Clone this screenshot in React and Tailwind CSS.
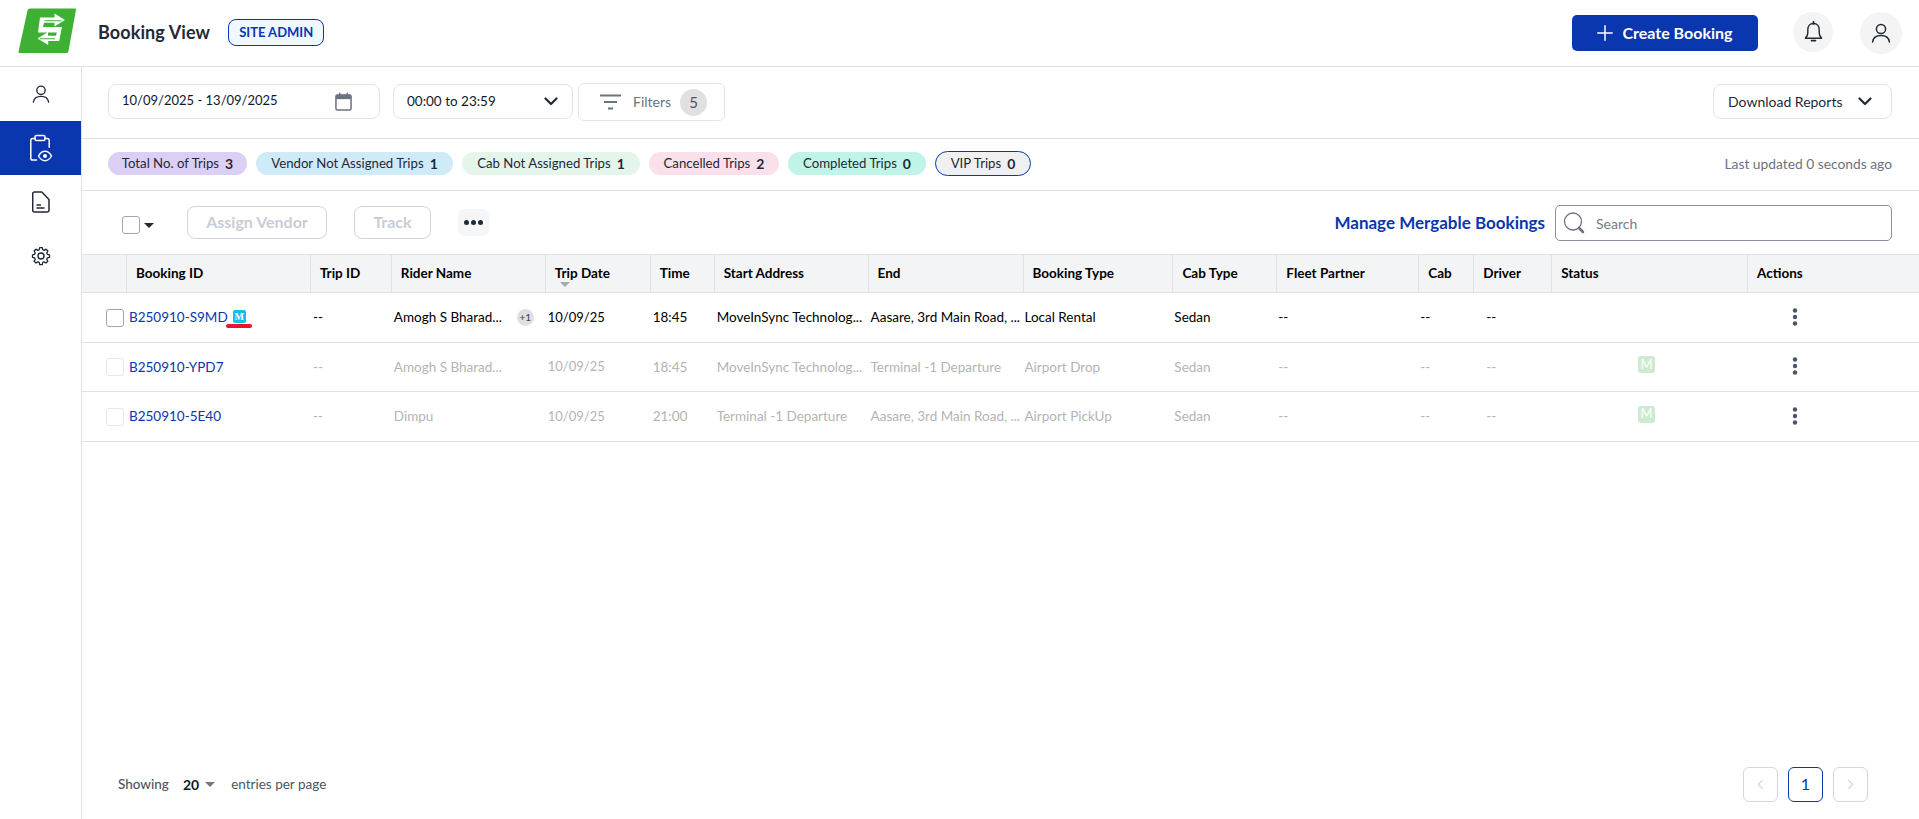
import React from "react";

const UserIcon = ({ className = "w-[22px] h-[22px]" }) => (
  <svg viewBox="0 0 22 22" fill="none" stroke="currentColor" strokeWidth="1.5" strokeLinecap="round" className={className}>
    <circle cx="11" cy="7" r="4.6" />
    <path d="M2.6 20c.6-4.4 4-6.4 8.4-6.4s7.800 2 8.400 6.400" />
  </svg>
);

const ClipEye = () => (
  <svg viewBox="0 0 24 28" fill="none" stroke="#fff" strokeWidth="1.500" strokeLinecap="round" strokeLinejoin="round" className="w-[24px] h-[28px]">
    <path d="M6 4.500H3.600A1.800 1.800 0 0 0 1.800 6.300v17.900A1.800 1.800 0 0 0 3.600 26h4" />
    <path d="M16 4.500h2.400a1.800 1.800 0 0 1 1.800 1.800v7" />
    <rect x="6" y="1.500" width="10" height="5" rx="1.500" />
    <path d="M9.500 22c1.800-3.200 4-4.700 6.500-4.700s4.700 1.500 6.500 4.700c-1.800 3.200-4 4.700-6.500 4.700S11.300 25.200 9.500 22Z" fill="#0a36b0" />
    <circle cx="16" cy="22" r="2" fill="#fff" stroke="none" />
  </svg>
);

const DocIcon = () => (
  <svg viewBox="0 0 18 22" fill="none" stroke="#1f2937" strokeWidth="1.500" strokeLinejoin="round" strokeLinecap="round" className="w-[18px] h-[22px]">
    <path d="M2.500 1h7.300L17 8.500v10.800a1.800 1.800 0 0 1-1.800 1.800H2.500a1.800 1.800 0 0 1-1.800-1.800V2.800A1.800 1.800 0 0 1 2.500 1Z" />
    <path d="M5 14h3.500M5 17h7" />
  </svg>
);

const GearIcon = () => (
  <svg viewBox="0 0 24 24" fill="none" stroke="#1f2937" strokeWidth="1.700" strokeLinecap="round" strokeLinejoin="round" className="w-[20px] h-[20px]">
    <path d="M10.300 2.300h3.400l.6 2.800 1.900.8 2.400-1.500 2.400 2.400-1.500 2.400.8 1.900 2.800.6v3.400l-2.800.6-.8 1.900 1.500 2.400-2.400 2.400-2.400-1.500-1.900.8-.6 2.800h-3.400l-.6-2.800-1.900-.8-2.400 1.500-2.400-2.400 1.500-2.400-.8-1.900-2.800-.6v-3.400l2.800-.6.8-1.900-1.500-2.400 2.400-2.400 2.400 1.500 1.900-.8Z" transform="translate(12 12) scale(.92) translate(-12 -13.300)" />
    <circle cx="12" cy="12" r="3.600" />
  </svg>
);

const Logo = () => (
  <svg viewBox="0 0 58 45" className="w-[58px] h-[45px]">
    <path d="M12 0.500H57a1 1 0 0 1 1 1.200L50.500 43a2 2 0 0 1-2 2H1.500a1 1 0 0 1-1-1.200L9.500 2.500A2.500 2.500 0 0 1 12 0.500Z" fill="#3eb034" />
    <path d="M22 9.500h14.500V5.500L47 12l-10.500 6.500v-3.700H26l-1.100 4.300h19l-2.700 14h-11v4L19.500 30.500 30 24v3.800h8l.8-3.400H20L22 9.500Z" fill="#fff" />
    <path d="M26.500 12.800h17M22 30.700h15" stroke="#3eb034" strokeWidth="1.100" />
  </svg>
);

const Chevron = ({ className = "w-[14px] h-[9px]" }) => (
  <svg viewBox="0 0 14 9" fill="none" stroke="#1f2937" strokeWidth="2.200" strokeLinecap="round" strokeLinejoin="round" className={className}>
    <path d="M1.500 1.500 7 7l5.500-5.500" />
  </svg>
);

const Dots = () => (
  <svg viewBox="0 0 6 20" className="w-[6px] h-[20px]" fill="#475569">
    <circle cx="3" cy="3.500" r="2.200" />
    <circle cx="3" cy="10" r="2.200" />
    <circle cx="3" cy="16.500" r="2.200" />
  </svg>
);

const chips = [
  ["Total No. of Trips", "3", "bg-[#dccff5] w-[139px]"],
  ["Vendor Not Assigned Trips", "1", "bg-[#cfebf7] w-[197px]"],
  ["Cab Not Assigned Trips", "1", "bg-[#e4f5ec] w-[178px]"],
  ["Cancelled Trips", "2", "bg-[#fae0ea] w-[130px]"],
  ["Completed Trips", "0", "bg-[#c0f4e8] w-[138px]"],
];

const cols = [
  ["", "w-[45px]"],
  ["Booking ID", "w-[184px]"],
  ["Trip ID", "w-[81px]"],
  ["Rider Name", "w-[154px]"],
  ["Trip Date", "w-[105px]"],
  ["Time", "w-[64px]"],
  ["Start Address", "w-[154px]"],
  ["End", "w-[155px]"],
  ["Booking Type", "w-[150px]"],
  ["Cab Type", "w-[104px]"],
  ["Fleet Partner", "w-[142px]"],
  ["Cab", "w-[55px]"],
  ["Driver", "w-[78px]"],
  ["Status", "w-[196px]"],
  ["Actions", "w-[171px]"],
];

const rows = [
  { id: "B250910-S9MD", rider: "Amogh S Bharad...", date: "10/09/25", time: "18:45", start: "MoveInSync Technolog...", end: "Aasare, 3rd Main Road, ...", type: "Local Rental", h: "h-[50px]" },
  { id: "B250910-YPD7", rider: "Amogh S Bharad...", date: "10/09/25", time: "18:45", start: "MoveInSync Technolog...", end: "Terminal -1 Departure", type: "Airport Drop", muted: true, h: "h-[49px]" },
  { id: "B250910-5E40", rider: "Dimpu", date: "10/09/25", time: "21:00", start: "Terminal -1 Departure", end: "Aasare, 3rd Main Road, ...", type: "Airport PickUp", muted: true, h: "h-[50px]" },
];

function Row({ r }) {
  const c = r.muted ? "text-[#b4b4b4]" : "text-black";
  return (
    <div className={`flex items-center border-b border-[#e2e2e2] text-[13.5px] ${r.h} ${c}`}>
      <div className="w-[45px] pl-[24px]">
        <div className={`w-[18px] h-[18px] rounded-[3px] border ${r.muted ? "border-[#e4e7ec]" : "border-[#9ca8b8]"}`} />
      </div>
      <div className="w-[184px] pl-[2px] flex items-center text-[#0a36b0] relative">
        <span>{r.id}</span>
        {!r.muted && (
          <>
            <span className="ml-[5px] -mt-[3px] w-[13px] h-[13px] rounded-[2px] bg-[#13bdf0] text-white text-[10px] font-bold flex items-center justify-center font-['Liberation_Serif',serif]">M</span>
            <span className="absolute left-[99px] top-[17px] w-[26px] h-[4px] rounded-full bg-[#e8152b]" />
          </>
        )}
      </div>
      <div className="w-[81px] pl-[2px]">--</div>
      <div className="w-[154px] pl-[2px] flex items-center">
        <span className="w-[123px] whitespace-nowrap">{r.rider}</span>
        {!r.muted && <span className="w-[17px] h-[17px] rounded-full bg-[#e0e0e0] text-[10px] text-[#374151] flex items-center justify-center">+1</span>}
      </div>
      <div className="w-[105px] pl-[2px] text-[13px]">{r.date}</div>
      <div className="w-[64px] pl-[2px]">{r.time}</div>
      <div className="w-[154px] pl-[2px] whitespace-nowrap">{r.start}</div>
      <div className="w-[155px] pl-[2px] whitespace-nowrap">{r.end}</div>
      <div className="w-[150px] pl-[1px]">{r.type}</div>
      <div className="w-[104px] pl-[1px]">Sedan</div>
      <div className="w-[142px] pl-[1px]">--</div>
      <div className="w-[55px] pl-[1px]">--</div>
      <div className="w-[78px] pl-[12px]">--</div>
      <div className="w-[196px] pl-[86px]">
        {r.muted && <span className="-mt-[5px] w-[17px] h-[17px] rounded-[3px] bg-[#cdebd0] text-white text-[13px] flex items-center justify-center">M</span>}
      </div>
      <div className="w-[171px] pl-[44px] flex items-center -mt-[2px]"><Dots /></div>
    </div>
  );
}

export default function App() {
  return (
    <div className="w-[1919px] h-[819px] overflow-hidden bg-white font-['Lato',sans-serif] text-[#111827] flex flex-col">
      <header className="h-[67px] shrink-0 border-b border-[#e2e2e2] flex items-center">
        <div className="ml-[18px] -mt-[6px]"><Logo /></div>
        <h1 className="ml-[22px] text-[18px] font-bold tracking-[0.1px] text-[#1f2937] -mt-[1px]">Booking View</h1>
        <span className="ml-[18px] h-[27px] w-[96px] rounded-lg border border-[#0a36b0] bg-[#f0f8ff] text-[#0a36b0] text-[13px] font-bold flex items-center justify-center -mt-[1px]">SITE ADMIN</span>
        <button className="ml-auto h-[36px] w-[186px] rounded-[5px] bg-[#0a36b0] text-white text-[16px] font-bold flex items-center justify-center gap-[9px] -mt-[1px]">
          <svg viewBox="0 0 16 16" className="w-[16px] h-[16px]" stroke="#fff" strokeWidth="1.500" strokeLinecap="round"><path d="M8 .8v14.400M.8 8h14.400" /></svg>
          Create Booking
        </button>
        <div className="ml-[35px] w-[40px] h-[40px] rounded-full bg-[#f4f4f4] flex items-center justify-center -mt-[2px]">
          <svg viewBox="0 0 20 24" fill="none" stroke="#1f2937" strokeWidth="1.500" strokeLinejoin="round" className="w-[19px] h-[23px]">
            <path d="M10 2.500c-3.800 0-6 3-6 6.500v3.500c0 2-1 3.800-2.500 5.500h17c-1.500-1.700-2.500-3.500-2.500-5.500V9c0-3.500-2.200-6.500-6-6.500Z" />
            <path d="M10 1v1.500M8 20.500h4" strokeLinecap="round" strokeWidth="2" />
          </svg>
        </div>
        <div className="ml-[27px] mr-[17px] w-[42px] h-[42px] rounded-full bg-[#f4f4f4] flex items-center justify-center text-[#1f2937]">
          <UserIcon />
        </div>
      </header>

      <div className="flex flex-1 min-h-0">
        <aside className="w-[82px] shrink-0 border-r border-[#e2e2e2] flex flex-col">
          <div className="h-[54px] flex items-center justify-center text-[#1f2937]"><UserIcon className="w-[20px] h-[20px]" /></div>
          <div className="h-[54px] bg-[#0a36b0] flex items-center justify-center"><ClipEye /></div>
          <div className="h-[54px] flex items-center justify-center"><DocIcon /></div>
          <div className="h-[54px] flex items-center justify-center"><GearIcon /></div>
        </aside>

        <main className="w-[1837px] flex flex-col min-h-0">
          <div className="h-[72px] shrink-0 border-b border-[#e2e2e2] flex items-center pl-[26px] pr-[27px] text-[14px]">
            <div className="w-[272px] h-[35px] -mt-[3px] rounded-lg border border-[#e2e4e8] flex items-center pl-[13px] pr-[27px] justify-between">
              <span className="text-[13px]">10/09/2025 - 13/09/2025</span>
              <svg viewBox="0 0 18 20" fill="none" className="w-[17px] h-[19px]">
                <rect x="1" y="3" width="16" height="16" rx="1.500" stroke="#6b7280" strokeWidth="1.600" />
                <path d="M1 3h16v4.500H1z" fill="#6b7280" />
                <path d="M5 .8v3M13 .8v3" stroke="#6b7280" strokeWidth="1.600" />
              </svg>
            </div>
            <div className="ml-[13px] w-[180px] h-[35px] -mt-[3px] rounded-lg border border-[#e2e4e8] flex items-center pl-[13px] pr-[14px] justify-between">
              <span className="text-[13.5px]">00:00 to 23:59</span>
              <Chevron />
            </div>
            <div className="ml-[5px] w-[147px] h-[38px] -mt-[1px] rounded-md border border-[#e2e4e8] flex items-center pl-[21px]">
              <svg viewBox="0 0 21 16" className="w-[21px] h-[16px]" stroke="#6b7280" strokeWidth="1.800">
                <path d="M0 1.500h21M4 8h13M8 14.500h5" />
              </svg>
              <span className="ml-[12px] -mt-[1px] text-[#6b7280]">Filters</span>
              <span className="ml-[9px] w-[27px] h-[27px] rounded-full bg-[#e0e0e0] text-[#4b5563] text-[15px] flex items-center justify-center">5</span>
            </div>
            <div className="ml-auto w-[179px] h-[35px] -mt-[2px] rounded-lg border border-[#e2e4e8] flex items-center pl-[14px] pr-[19px] justify-between text-[#1f2937]">
              <span>Download Reports</span>
              <Chevron />
            </div>
          </div>

          <div className="h-[52px] shrink-0 border-b border-[#e2e2e2] flex items-center pl-[26px] pr-[27px] text-[13.2px]">
            <div className="flex items-center gap-[9px] -mt-[2px]">
              {chips.map(([label, n, c]) => (
                <span key={label} className={`h-[23px] rounded-full flex items-center justify-center gap-[6px] text-[#1f2937] ${c}`}>
                  {label}<b className="font-bold text-[14px]">{n}</b>
                </span>
              ))}
              <span className="h-[25px] w-[96px] rounded-full border border-[#0a36b0] bg-[#f0f0f0] flex items-center justify-center gap-[6px] text-[#1f2937]">
                VIP Trips<b className="font-bold text-[14px]">0</b>
              </span>
            </div>
            <span className="ml-auto text-[#6b7280] text-[13.8px]">Last updated 0 seconds ago</span>
          </div>

          <div className="h-[63px] shrink-0 flex items-center pl-[40px] pr-[27px]">
            <div className="w-[18px] h-[18px] mt-[4px] rounded-[3px] border border-[#9ca8b8]" />
            <span className="ml-[4px] mt-[6px] w-0 h-0 border-x-[5px] border-x-transparent border-t-[5px] border-t-[#1f2937]" />
            <button className="ml-[33px] w-[140px] h-[33px] -mt-[1px] rounded-lg border border-[#cfd4dc] text-[16px] font-bold text-[#c7ccd6]">Assign Vendor</button>
            <button className="ml-[27px] w-[77px] h-[33px] -mt-[1px] rounded-lg border border-[#cfd4dc] text-[16px] font-bold text-[#c7ccd6]">Track</button>
            <span className="ml-[27px] w-[31px] h-[27px] rounded-md bg-[#f5f6f8] flex items-center justify-center gap-[2px]">
              <i className="w-[5px] h-[5px] rounded-full bg-[#1f2937]" />
              <i className="w-[5px] h-[5px] rounded-full bg-[#1f2937]" />
              <i className="w-[5px] h-[5px] rounded-full bg-[#1f2937]" />
            </span>
            <span className="ml-auto text-[17px] font-bold text-[#0a36b0]">Manage Mergable Bookings</span>
            <div className="ml-[10px] w-[337px] h-[36px] mt-[1px] rounded-[5px] border border-[#8c8fa3] flex items-center pl-[7px]">
              <svg viewBox="0 0 22 24" fill="none" className="w-[22px] h-[24px]">
                <circle cx="10" cy="10.500" r="8.500" stroke="#6b7280" strokeWidth="1.300" />
                <path d="M16 17l4 4" stroke="#6b7280" strokeWidth="2.500" strokeLinecap="round" />
              </svg>
              <span className="ml-[11px] text-[14px] text-[#777c85]">Search</span>
            </div>
          </div>

          <div className="h-[39px] shrink-0 flex bg-[#f3f4f6] border-y border-[#e2e2e2] text-[13.5px] font-bold text-black">
            {cols.map(([label, w], i) => (
              <div key={i} className={`${w} pl-[9px] flex items-center relative ${i < 14 ? "border-r border-[#e2e2e2]" : ""}`}>
                {label}
                {label === "Trip Date" && <span className="absolute left-[14px] top-[27px] w-0 h-0 border-x-[5px] border-x-transparent border-t-[5px] border-t-[#a3a8b0]" />}
              </div>
            ))}
          </div>

          {rows.map((r) => <Row key={r.id} r={r} />)}

          <div className="mt-auto h-[70px] shrink-0 flex items-center pl-[36px] pr-[51px] text-[13.5px] text-[#4b5563]">
            <span className="font-medium">Showing</span>
            <span className="ml-[14px] text-[14px] text-[#111827] font-bold">20</span>
            <span className="ml-[6px] w-0 h-0 border-x-[5px] border-x-transparent border-t-[5px] border-t-[#777]" />
            <span className="ml-[16px]">entries per page</span>
            <div className="ml-auto flex gap-[10px]">
              <span className="w-[35px] h-[35px] rounded-md border border-[#cdd7f2] flex items-center justify-center">
                <svg viewBox="0 0 8 12" fill="none" stroke="#cdd7f2" strokeWidth="1.500" className="w-[7px] h-[11px]"><path d="M6.500 1 1.500 6l5 5" /></svg>
              </span>
              <span className="w-[35px] h-[35px] rounded-md border border-[#0a36b0] text-[#0a36b0] text-[16px] flex items-center justify-center">1</span>
              <span className="w-[35px] h-[35px] rounded-md border border-[#cdd7f2] flex items-center justify-center">
                <svg viewBox="0 0 8 12" fill="none" stroke="#cdd7f2" strokeWidth="1.500" className="w-[7px] h-[11px]"><path d="M1.500 1l5 5-5 5" /></svg>
              </span>
            </div>
          </div>
        </main>
      </div>
    </div>
  );
}
